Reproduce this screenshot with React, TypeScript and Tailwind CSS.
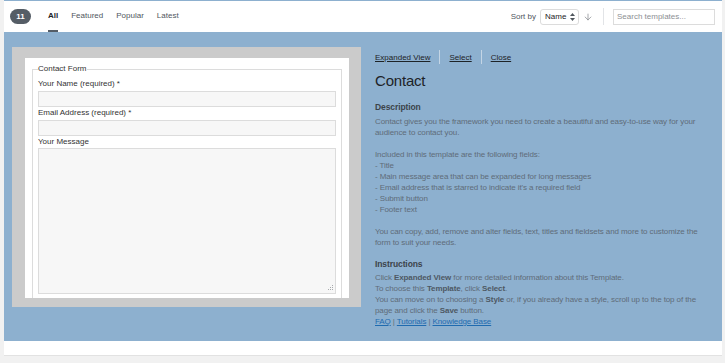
import { ArrowDown } from "lucide-react"

const tabs = ["All", "Featured", "Popular", "Latest"]

const FormPreview = () => {
    return (
        <div className="w-[349px] h-[260px] shrink-0 bg-[#cbcbcb] pl-[13px] pr-[12px] pt-[11px]">
            <div className="w-[324px] h-[240px] bg-white overflow-hidden px-[7px] pt-[6px] text-[#333] text-[8px]">
                <fieldset className="border border-[#dcdcdc] px-[5px] pt-[5px] pb-[30px]">
                    <legend className="leading-[10px] pr-[1px]">Contact Form</legend>
                    <label className="block leading-[10px] mb-[2px]">Your Name (required) *</label>
                    <input readOnly className="block w-full h-[16px] bg-[#f7f7f7] border border-[#dcdcdc] mb-[1px] outline-none" />
                    <label className="block leading-[10px] mb-[2px]">Email Address (required) *</label>
                    <input readOnly className="block w-full h-[16px] bg-[#f7f7f7] border border-[#dcdcdc] mb-[1px] outline-none" />
                    <label className="block leading-[10px] mb-[1px]">Your Message</label>
                    <div className="relative">
                        <textarea readOnly className="block w-full h-[146px] bg-[#f7f7f7] border border-[#dcdcdc] outline-none resize-none" />
                        {/* resize grip */}
                        <svg width="7" height="7" viewBox="0 0 7 7" fill="#a7aaad" className="absolute right-[2px] bottom-[2px]">
                            <rect x="5" y="0" width="1" height="1" />
                            <rect x="3" y="2" width="1" height="1" />
                            <rect x="5" y="2" width="1" height="1" />
                            <rect x="1" y="4" width="1" height="1" />
                            <rect x="3" y="4" width="1" height="1" />
                            <rect x="5" y="4" width="1" height="1" />
                        </svg>
                    </div>
                    <div className="mt-[6px] leading-[10px]">&nbsp;</div>
                </fieldset>
            </div>
        </div>
    )
}

const Details = () => {
    return (
        <div className="ml-[14px] mt-[3px] w-[345px] text-[8px] text-[#5f6c79] tracking-[-0.1px]">
            <div className="flex items-center h-[14px] text-[#1d2327] tracking-normal">
                <a className="underline leading-[11px]">Expanded View</a>
                <span className="w-px h-[14px] bg-[#c4d5e5] mx-[9px]" />
                <a className="underline leading-[11px]">Select</a>
                <span className="w-px h-[14px] bg-[#c4d5e5] mx-[9px]" />
                <a className="underline leading-[11px]">Close</a>
            </div>
            <h2 className="mt-[8px] text-[15px] leading-[18px] text-[#1d2327] tracking-[-0.2px]">Contact</h2>
            <h3 className="mt-[12px] mb-[3px] text-[8.5px] leading-[11px] font-bold text-[#3c434a]">Description</h3>
            <p className="leading-[11px] whitespace-nowrap">
                Contact gives you the framework you need to create a beautiful and easy-to-use way for your<br />
                audience to contact you.<br />
                <br />
                Included in this template are the following fields:<br />
                - Title<br />
                - Main message area that can be expanded for long messages<br />
                - Email address that is starred to indicate it's a required field<br />
                - Submit button<br />
                - Footer text<br />
                <br />
                You can copy, add, remove and alter fields, text, titles and fieldsets and more to customize the<br />
                form to suit your needs.
            </p>
            <h3 className="mt-[11px] mb-[2px] text-[8.5px] leading-[11px] font-bold text-[#3c434a]">Instructions</h3>
            <p className="leading-[11px] whitespace-nowrap">
                Click <b className="text-[#4d5863]">Expanded View</b> for more detailed information about this Template.<br />
                To choose this <b className="text-[#4d5863]">Template</b>, click <b className="text-[#4d5863]">Select</b>.<br />
                You can move on to choosing a <b className="text-[#4d5863]">Style</b> or, if you already have a style, scroll up to the top of the<br />
                page and click the <b className="text-[#4d5863]">Save</b> button.<br />
                <a className="underline text-[#1f6bb0]">FAQ</a> | <a className="underline text-[#1f6bb0]">Tutorials</a> | <a className="underline text-[#1f6bb0]">Knowledge Base</a>
            </p>
        </div>
    )
}

const App = () => {
    return (
        <div className="w-[725px] h-[363px] bg-[#f1f1f1] overflow-hidden font-['Liberation_Sans',Arial,sans-serif]">
            <div className="ml-[4px] w-[718px] bg-white border-t border-[#8db0cf] border-b border-b-[#e2e2e2]">
                <div className="h-[31px] flex items-stretch pl-[6px] pr-[7px] text-[8px]">
                    <div className="flex items-center">
                        <span className="w-[21px] h-[15px] rounded-full bg-[#555d66] text-white font-bold flex items-center justify-center">11</span>
                    </div>
                    <nav className="flex items-stretch gap-[13px] ml-[17px]">
                        {tabs.map((t) => (
                            <a
                                key={t}
                                className={t === "All"
                                    ? "flex items-center border-b-2 border-[#555d66] text-[#1d2327] font-semibold"
                                    : "flex items-center border-b-2 border-transparent text-[#50575e]"}
                            >
                                {t}
                            </a>
                        ))}
                    </nav>
                    <div className="ml-auto flex items-center text-[#50575e]">
                        <span>Sort by</span>
                        <div className="ml-[4px] w-[39px] h-[16px] bg-white border border-[#dcdcdc] rounded-[3px] flex items-center justify-between pl-[4px] pr-[3px] text-[#1d2327]">
                            <span>Name</span>
                            <svg width="5" height="8" viewBox="0 0 5 8" fill="#50575e">
                                <path d="M2.5 0 L5 3 L0 3 Z" />
                                <path d="M0 5 L5 5 L2.5 8 Z" />
                            </svg>
                        </div>
                        <ArrowDown size={10} strokeWidth={1.6} className="ml-[4px] text-[#787c82]" />
                        <span className="ml-[10px] w-px h-[17px] bg-[#e2e4e7]" />
                        <div className="ml-[9px] w-[102px] h-[16px] border border-[#dcdcdc] flex items-center pl-[3px] text-[#8c8f94]">
                            Search templates...
                        </div>
                    </div>
                </div>
                <div className="h-[309px] bg-[#8db0cf] flex items-start pl-[8px] pt-[15px]">
                    <FormPreview />
                    <Details />
                </div>
                <div className="h-[14px] bg-white" />
            </div>
        </div>
    )
}

export default App
